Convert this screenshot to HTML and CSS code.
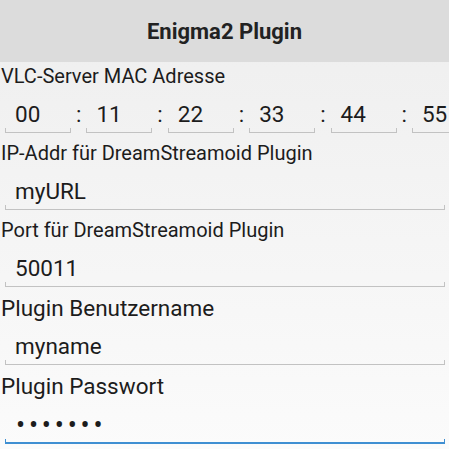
FILE: index.html
```html
<!DOCTYPE html>
<html lang="de">
<head>
    <meta charset="UTF-8">
    <meta name="viewport" content="width=device-width, initial-scale=1.0">
    <title>Enigma2 Plugin</title>
    <link rel="stylesheet" href="styles.css">
</head>
<body>
    <header class="title-bar">Enigma2 Plugin</header>

    <main class="form">
        <div class="field">
            <div class="field-label">VLC-Server MAC Adresse</div>
            <div class="mac-row">
                <div class="edit mac-part"><div class="edit-value">00</div><div class="edit-line"></div></div>
                <span class="mac-sep">:</span>
                <div class="edit mac-part"><div class="edit-value">11</div><div class="edit-line"></div></div>
                <span class="mac-sep">:</span>
                <div class="edit mac-part"><div class="edit-value">22</div><div class="edit-line"></div></div>
                <span class="mac-sep">:</span>
                <div class="edit mac-part"><div class="edit-value">33</div><div class="edit-line"></div></div>
                <span class="mac-sep">:</span>
                <div class="edit mac-part"><div class="edit-value">44</div><div class="edit-line"></div></div>
                <span class="mac-sep">:</span>
                <div class="edit mac-part"><div class="edit-value">55</div><div class="edit-line"></div></div>
            </div>
        </div>

        <div class="field">
            <div class="field-label">IP-Addr für DreamStreamoid Plugin</div>
            <div class="edit wide"><div class="edit-value">myURL</div><div class="edit-line"></div></div>
        </div>

        <div class="field">
            <div class="field-label">Port für DreamStreamoid Plugin</div>
            <div class="edit wide"><div class="edit-value">50011</div><div class="edit-line"></div></div>
        </div>

        <div class="field">
            <div class="field-label large">Plugin Benutzername</div>
            <div class="edit wide"><div class="edit-value">myname</div><div class="edit-line"></div></div>
        </div>

        <div class="field">
            <div class="field-label large">Plugin Passwort</div>
            <div class="edit wide focused"><div class="edit-value password">•••••••</div><div class="edit-line"></div></div>
        </div>
    </main>
</body>
</html>
```

FILE: styles.css
```css
html, body {
    margin: 0;
    padding: 0;
    height: 100%;
}

body {
    font-family: Roboto, "Noto Sans", sans-serif;
    color: #1c1c1c;
    background: linear-gradient(#eeeeee, #fbfbfb);
    overflow: hidden;
}

.title-bar {
    height: 62px;
    background: #dcdcdc;
    display: flex;
    align-items: center;
    justify-content: center;
    font-size: 22px;
    font-weight: bold;
    color: #222;
}

.form {
    padding-top: 1px;
}

.field {
    margin-bottom: 7px;
}

.field-label {
    font-size: 20px;
    line-height: 27px;
    padding-left: 1px;
    white-space: nowrap;
}

.field-label.large {
    font-size: 22.5px;
    line-height: 28px;
}

.edit {
    margin: 0 4px 0 5px;
    padding-top: 10px;
}

.focused {
    padding-top: 11px;
}

.edit-value {
    font-size: 22.5px;
    line-height: 28px;
    padding-left: 10px;
    white-space: nowrap;
}

.edit-line {
    height: 4px;
    border: 1px solid #c2c2c2;
    border-top: 0;
}

.focused .edit-line {
    height: 3px;
    border-color: #3f8fd2;
    border-bottom-width: 2px;
}

.password {
    font-size: 27px;
    letter-spacing: 3.8px;
    padding-left: 11px;
}

.mac-row {
    display: flex;
    align-items: flex-start;
    width: 540px;
    padding-left: 5px;
}

.mac-part {
    flex: 0 0 66px;
    margin: 0;
}

.mac-sep {
    flex: 0 0 15.4px;
    text-align: center;
    font-size: 22.5px;
    line-height: 28px;
    padding-top: 10px;
}
```
